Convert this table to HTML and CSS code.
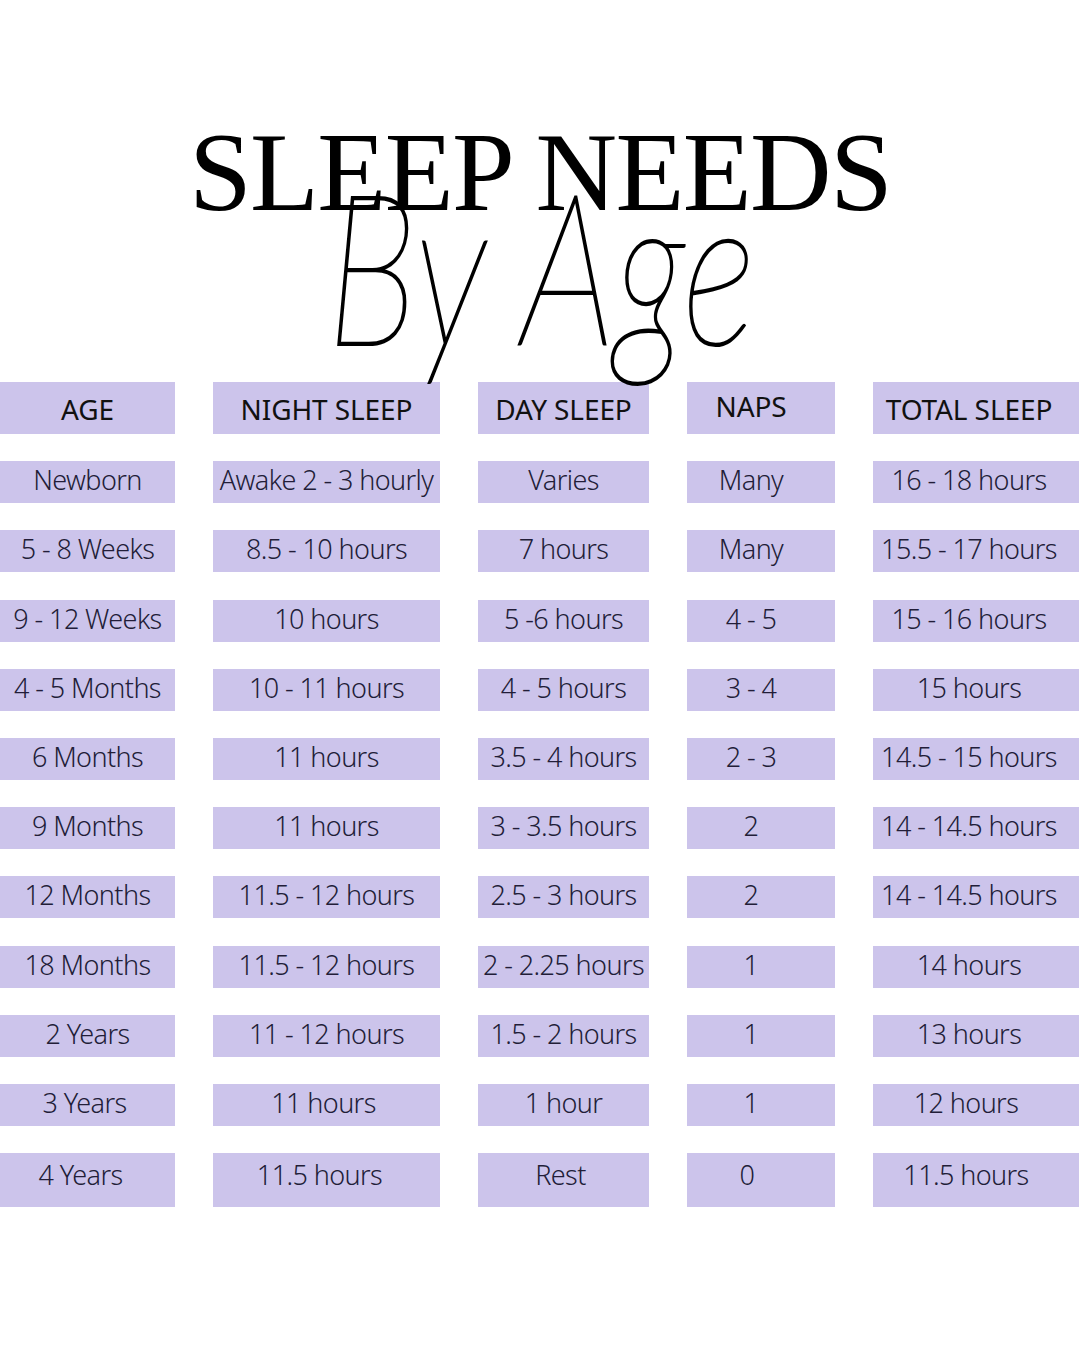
FILE: index.html
```html
<!DOCTYPE html>
<html lang="en">
<head>
<meta charset="utf-8">
<title>Sleep Needs By Age</title>
<link rel="stylesheet" href="styles.css">
</head>
<body>
<div class="page">
  <header class="title">
    <h1 class="title-main">SLEEP NEEDS</h1>
    <div class="title-script">By Age</div>
  </header>
  <div class="table">
    <div class="cell head">AGE</div>
    <div class="cell head">NIGHT SLEEP</div>
    <div class="cell head">DAY SLEEP</div>
    <div class="cell head c4">NAPS</div>
    <div class="cell head c5">TOTAL SLEEP</div>

    <div class="cell">Newborn</div>
    <div class="cell">Awake 2 - 3 hourly</div>
    <div class="cell">Varies</div>
    <div class="cell c4">Many</div>
    <div class="cell c5">16 - 18 hours</div>

    <div class="cell">5 - 8 Weeks</div>
    <div class="cell">8.5 - 10 hours</div>
    <div class="cell">7 hours</div>
    <div class="cell c4">Many</div>
    <div class="cell c5">15.5 - 17 hours</div>

    <div class="cell">9 - 12 Weeks</div>
    <div class="cell">10 hours</div>
    <div class="cell">5 -6 hours</div>
    <div class="cell c4">4 - 5</div>
    <div class="cell c5">15 - 16 hours</div>

    <div class="cell">4 - 5 Months</div>
    <div class="cell">10 - 11 hours</div>
    <div class="cell">4 - 5 hours</div>
    <div class="cell c4">3 - 4</div>
    <div class="cell c5">15 hours</div>

    <div class="cell">6 Months</div>
    <div class="cell">11 hours</div>
    <div class="cell">3.5 - 4 hours</div>
    <div class="cell c4">2 - 3</div>
    <div class="cell c5">14.5 - 15 hours</div>

    <div class="cell">9 Months</div>
    <div class="cell">11 hours</div>
    <div class="cell">3 - 3.5 hours</div>
    <div class="cell c4">2</div>
    <div class="cell c5">14 - 14.5 hours</div>

    <div class="cell">12 Months</div>
    <div class="cell">11.5 - 12 hours</div>
    <div class="cell">2.5 - 3 hours</div>
    <div class="cell c4">2</div>
    <div class="cell c5">14 - 14.5 hours</div>

    <div class="cell">18 Months</div>
    <div class="cell">11.5 - 12 hours</div>
    <div class="cell">2 - 2.25 hours</div>
    <div class="cell c4">1</div>
    <div class="cell c5">14 hours</div>

    <div class="cell">2 Years</div>
    <div class="cell">11 - 12 hours</div>
    <div class="cell">1.5 - 2 hours</div>
    <div class="cell c4">1</div>
    <div class="cell c5">13 hours</div>

    <div class="cell shift">3 Years</div>
    <div class="cell shift">11 hours</div>
    <div class="cell">1 hour</div>
    <div class="cell c4">1</div>
    <div class="cell c5 shift">12 hours</div>

    <div class="cell last shift2">4 Years</div>
    <div class="cell last shift2">11.5 hours</div>
    <div class="cell last shift">Rest</div>
    <div class="cell last c4 shift">0</div>
    <div class="cell last c5 shift">11.5 hours</div>
  </div>
</div>
</body>
</html>
```

FILE: styles.css
```css
html, body {
  margin: 0;
  padding: 0;
  background: #ffffff;
}

.page {
  width: 1080px;
  height: 1350px;
  overflow: hidden;
  background: #ffffff;
}

.title {
  position: relative;
  height: 382px;
  padding-top: 115px;
  box-sizing: border-box;
}

.title-main {
  margin: 0;
  font-family: "Liberation Serif", "Times New Roman", serif;
  font-weight: 400;
  font-size: 113px;
  line-height: 1;
  letter-spacing: -1.7px;
  text-align: center;
  color: #000000;
}

.title-script {
  position: absolute;
  left: 0;
  right: 0;
  top: 132px;
  text-align: center;
  font-family: "Lato", "DejaVu Sans", sans-serif;
  font-style: italic;
  font-weight: 100;
  font-size: 240px;
  line-height: 1;
  color: #000000;
  transform: scale(0.66, 0.88);
  transform-origin: 543px 213px;
  -webkit-text-stroke: 2.5px #000;
}

.table {
  display: grid;
  grid-template-columns: 175px 227px 171px 148px 206px;
  grid-template-rows: 52px repeat(10, 42px) 54px;
  column-gap: 38px;
  row-gap: 27.2px;
}

.cell {
  background: #ccc4eb;
  display: flex;
  align-items: center;
  justify-content: center;
  font-family: "Noto Sans", "Open Sans", sans-serif;
  font-weight: 300;
  font-size: 27px;
  letter-spacing: -0.6px;
  color: #221d38;
  white-space: nowrap;
  overflow: hidden;
  padding-bottom: 5px;
  box-sizing: border-box;
}

.head {
  font-weight: 400;
  font-size: 28px;
  letter-spacing: -0.1px;
  color: #111111;
  padding-top: 2px;
  padding-bottom: 0;
}

.c4 {
  padding-right: 20px;
}

.c5 {
  padding-right: 14px;
}

.head.c4 {
  padding-top: 0;
  padding-bottom: 4px;
}

.last {
  padding-bottom: 12px;
}

.shift {
  padding-right: 6px;
}

.shift2 {
  padding-right: 14px;
}

.c4.shift {
  padding-right: 28px;
}

.c5.shift {
  padding-right: 20px;
}
```
